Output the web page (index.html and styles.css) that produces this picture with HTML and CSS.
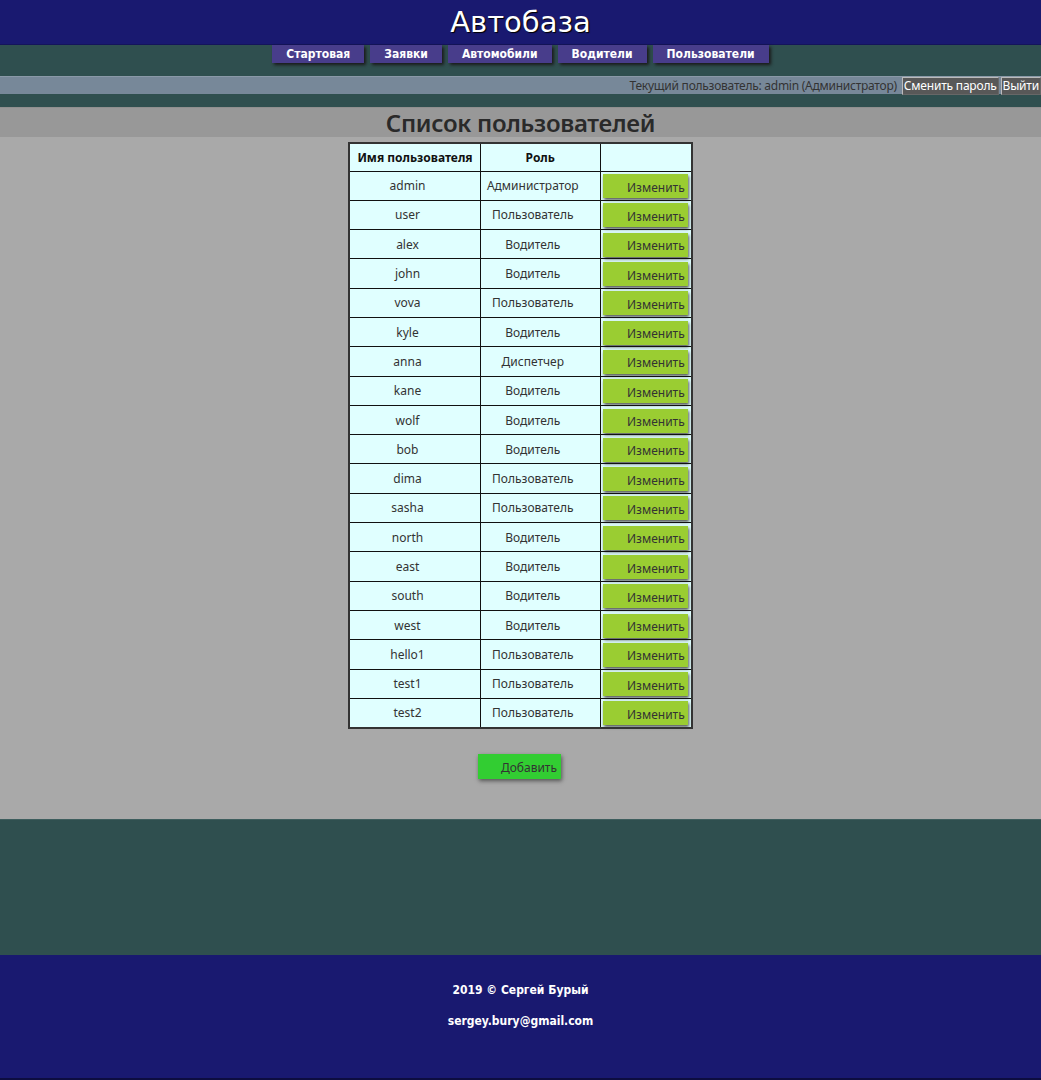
FILE: index.html
```html
<!DOCTYPE html>
<html lang="ru">
<head>
<meta charset="utf-8">
<title>Автобаза</title>
<link rel="stylesheet" href="styles.css">
</head>
<body>
<header class="site-header">
  <h1 class="logo">Автобаза</h1>
</header>
<div class="top-zone">
  <nav class="nav">
    <a class="nav-btn" href="#">Стартовая</a>
    <a class="nav-btn" href="#">Заявки</a>
    <a class="nav-btn" href="#">Автомобили</a>
    <a class="nav-btn" href="#">Водители</a>
    <a class="nav-btn" href="#">Пользователи</a>
  </nav>
  <div class="userbar">
    <span class="userbar-text">Текущий пользователь: admin (Администратор)</span>
    <button class="ub-btn">Сменить пароль</button>
    <button class="ub-btn">Выйти</button>
  </div>
</div>
<main class="content">
  <h2 class="page-title">Список пользователей</h2>
  <table class="users">
    <thead>
      <tr><th class="c1">Имя пользователя</th><th class="c2">Роль</th><th class="c3"></th></tr>
    </thead>
    <tbody>
      <tr><td>admin</td><td>Администратор</td><td><button class="edit">Изменить</button></td></tr>
      <tr><td>user</td><td>Пользователь</td><td><button class="edit">Изменить</button></td></tr>
      <tr><td>alex</td><td>Водитель</td><td><button class="edit">Изменить</button></td></tr>
      <tr><td>john</td><td>Водитель</td><td><button class="edit">Изменить</button></td></tr>
      <tr><td>vova</td><td>Пользователь</td><td><button class="edit">Изменить</button></td></tr>
      <tr><td>kyle</td><td>Водитель</td><td><button class="edit">Изменить</button></td></tr>
      <tr><td>anna</td><td>Диспетчер</td><td><button class="edit">Изменить</button></td></tr>
      <tr><td>kane</td><td>Водитель</td><td><button class="edit">Изменить</button></td></tr>
      <tr><td>wolf</td><td>Водитель</td><td><button class="edit">Изменить</button></td></tr>
      <tr><td>bob</td><td>Водитель</td><td><button class="edit">Изменить</button></td></tr>
      <tr><td>dima</td><td>Пользователь</td><td><button class="edit">Изменить</button></td></tr>
      <tr><td>sasha</td><td>Пользователь</td><td><button class="edit">Изменить</button></td></tr>
      <tr><td>north</td><td>Водитель</td><td><button class="edit">Изменить</button></td></tr>
      <tr><td>east</td><td>Водитель</td><td><button class="edit">Изменить</button></td></tr>
      <tr><td>south</td><td>Водитель</td><td><button class="edit">Изменить</button></td></tr>
      <tr><td>west</td><td>Водитель</td><td><button class="edit">Изменить</button></td></tr>
      <tr><td>hello1</td><td>Пользователь</td><td><button class="edit">Изменить</button></td></tr>
      <tr><td>test1</td><td>Пользователь</td><td><button class="edit">Изменить</button></td></tr>
      <tr><td>test2</td><td>Пользователь</td><td><button class="edit">Изменить</button></td></tr>
    </tbody>
  </table>
  <div class="add-row"><button class="add">Добавить</button></div>
</main>
<div class="spacer"></div>
<footer class="site-footer">
  <p>2019 © Сергей Бурый</p>
  <p>sergey.bury@gmail.com</p>
</footer>
</body>
</html>
```

FILE: styles.css
```css
* { box-sizing: border-box; }
html, body { margin: 0; padding: 0; }
body {
  font-family: "Noto Sans", "Open Sans", sans-serif;
  background: #2f4f4f;
  color: #333;
}
.site-header {
  background: #191970;
  height: 45px;
  border-bottom: 1px solid #14145a;
  display: flex;
  justify-content: center;
  align-items: center;
}
.logo {
  margin: 0;
  color: #fff;
  font-family: "DejaVu Sans", sans-serif;
  font-weight: normal;
  font-size: 29px;
  text-shadow: 1px 1px 1px #000;
}
.top-zone {
  background: #2f4f4f;
  height: 62px;
}
.nav {
  display: flex;
  justify-content: center;
  gap: 6px;
}
.nav-btn {
  display: block;
  height: 18px;
  line-height: 18px;
  padding: 0 14px;
  background: #483d8b;
  color: #fff;
  text-decoration: none;
  font-family: "DejaVu Sans Condensed", "DejaVu Sans", sans-serif;
  font-weight: bold;
  font-size: 12px;
  box-shadow: 2px 2px 3px #1a1a1a;
}
.userbar {
  margin-top: 13px;
  height: 18px;
  background: #778899;
  border-top: 1px solid #8a99a8;
  display: flex;
  justify-content: flex-end;
  align-items: center;
  gap: 2px;
}
.userbar-text {
  font-size: 12px;
  color: #333;
  margin-right: 3px;
  letter-spacing: -0.25px;
}
.ub-btn {
  height: 18px;
  padding: 0 1px;
  background: #585858;
  color: #fff;
  border: 1px solid #bbb;
  border-style: outset;
  font-family: "Noto Sans", sans-serif;
  font-size: 12px;
  line-height: 14px;
  letter-spacing: -0.2px;
}
.content {
  background: #a9a9a9;
  border-top: 1px solid #8f8f8f;
  padding-bottom: 40px;
}
.page-title {
  margin: 0;
  height: 29px;
  line-height: 29px;
  background: #989898;
  text-align: center;
  font-size: 24px;
  font-weight: 600;
  color: #2a2a2a;
  letter-spacing: -0.3px;
}
.users {
  margin: 5px auto 0;
  border-collapse: collapse;
  border: 2px solid #333;
  background: #e0ffff;
  font-size: 12px;
}
.users th, .users td {
  border: 1px solid #111;
  text-align: center;
  padding: 0;
  height: 29.3px;
}
.users td { padding-right: 15px; }
.users th { font-weight: bold; color: #111; height: 28px; }
.users .c1 { width: 131px; }
.users .c2 { width: 120px; }
.users .c3 { width: 91px; }
.users td:nth-child(3) {
  padding: 0 3px 0 2px;
  text-align: left;
}
.edit {
  display: block;
  width: 85px;
  height: 24px;
  margin-top: 1px;
  background: #9acd32;
  border: none;
  color: #333;
  font-family: "Noto Sans", sans-serif;
  font-size: 12px;
  text-align: right;
  padding: 2px 3px 0 0;
  box-shadow: 1px 2px 3px #555;
}
.add-row {
  display: flex;
  justify-content: center;
  margin-top: 25px;
  padding-right: 2px;
}
.add {
  width: 83px;
  height: 25px;
  background: #32cd32;
  border: none;
  color: #333;
  font-family: "Noto Sans", sans-serif;
  font-size: 12px;
  text-align: right;
  padding: 2px 4px 0 0;
  box-shadow: 1px 2px 4px #555;
}
.spacer {
  height: 136px;
  background: #2f4f4f;
  border-top: 1px solid #3e5e5e;
}
.site-footer {
  background: #191970;
  height: 125px;
  padding-top: 27px;
  border-bottom: 2px solid #0d0d40;
  text-align: center;
  color: #fff;
  font-family: "DejaVu Sans Condensed", "DejaVu Sans", sans-serif;
  font-weight: bold;
  font-size: 12px;
}
.site-footer p { margin: 0 0 15px; line-height: 16px; }
```
